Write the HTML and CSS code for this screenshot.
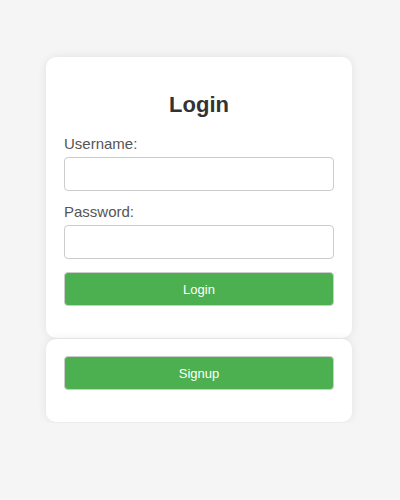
FILE: index.html
```html
<!DOCTYPE html>
<html lang="en">
<head>
  <meta charset="UTF-8" />
  <meta name="viewport" content="width=device-width, initial-scale=1.0"/>
  <title>Login</title>
  <link rel="stylesheet" href="styles.css">
</head>
<body>

  <div class="container">
    <h2 class="title">Login</h2>

    <form id="loginForm">
      <label for="username">Username:</label>
      <input type="text" id="username" />
      <label for="password">Password:</label>
      <input type="password" id="password" />
      <button type="submit">Login</button>
    </form>
  </div>

  <div class="container">
    <button type="button" class="signup-btn">Signup</button>
  </div>

</body>
</html>
```

FILE: styles.css
```css
* {
  box-sizing: border-box;
  margin: 0;
  padding: 0;
}

body {
  font-family: 'Liberation Sans', Arial, sans-serif;
  background-color: #f5f5f5;
  padding: 57px 2px 0 0;
}

.container {
  background-color: #fff;
  width: 306px;
  margin: 0 auto 1px;
  padding: 17px 18px;
  border-radius: 10px;
  box-shadow: 0 0 10px rgba(0, 0, 0, 0.08);
}

.title {
  text-align: center;
  font-size: 22px;
  color: #333;
  margin: 18px 0 17px;
}

form {
  display: flex;
  flex-direction: column;
}

label {
  font-size: 15px;
  color: #555;
  margin-bottom: 5px;
}

input {
  height: 34px;
  border: 1px solid #ccc;
  border-radius: 4px;
  padding: 0 8px;
  font-size: 14px;
  margin-bottom: 12px;
}

button {
  display: block;
  width: 100%;
  height: 34px;
  background-color: #4caf50;
  color: #fff;
  font-family: 'Liberation Sans', Arial, sans-serif;
  font-size: 13px;
  border: 1px solid #ccc;
  border-radius: 4px;
  cursor: pointer;
  margin-bottom: 15px;
}

form button {
  margin-top: 1px;
}
```
